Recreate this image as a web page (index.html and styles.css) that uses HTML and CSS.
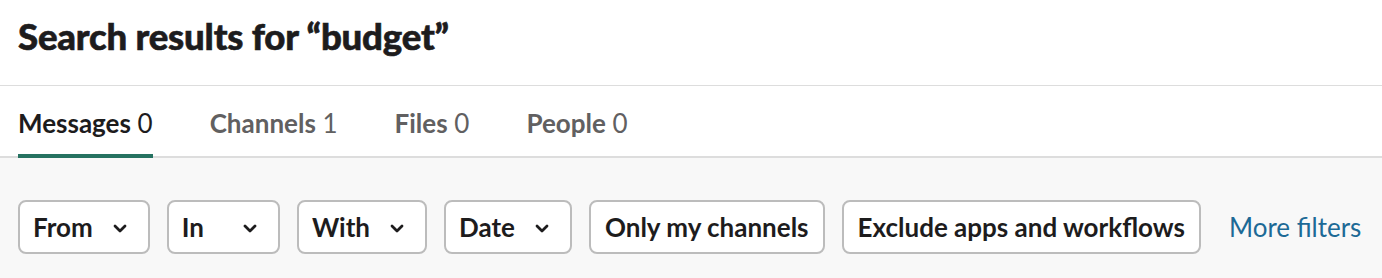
FILE: index.html
```html
<!DOCTYPE html>
<html>
<head>
<meta charset="utf-8">
<link rel="stylesheet" href="styles.css">
</head>
<body>
<div class="page">
  <header class="header">
    <h1 class="title">Search results for “budget”</h1>
  </header>
  <nav class="tabs">
    <div class="tab active"><span><span class="tab-label">Messages</span> <span class="tab-count">0</span></span></div>
    <div class="tab"><span><span class="tab-label">Channels</span> <span class="tab-count">1</span></span></div>
    <div class="tab"><span><span class="tab-label">Files</span> <span class="tab-count">0</span></span></div>
    <div class="tab"><span><span class="tab-label">People</span> <span class="tab-count">0</span></span></div>
  </nav>
  <section class="filters">
    <button class="filter dd"><span>From</span><svg class="chev" viewBox="0 0 14 9"><path d="M2 2 L7 7 L12 2" /></svg></button>
    <button class="filter dd w-in"><span>In</span><svg class="chev" viewBox="0 0 14 9"><path d="M2 2 L7 7 L12 2" /></svg></button>
    <button class="filter dd"><span>With</span><svg class="chev" viewBox="0 0 14 9"><path d="M2 2 L7 7 L12 2" /></svg></button>
    <button class="filter dd"><span>Date</span><svg class="chev" viewBox="0 0 14 9"><path d="M2 2 L7 7 L12 2" /></svg></button>
    <button class="filter">Only my channels</button>
    <button class="filter">Exclude apps and workflows</button>
    <a class="more" href="#">More filters</a>
  </section>
</div>
</body>
</html>
```
FILE: styles.css
```css
* { box-sizing: border-box; }
html, body { margin: 0; padding: 0; background: #fff; }
body { font-family: Lato, "Noto Sans", sans-serif; color: #1d1c1d; }
.page { width: 1382px; height: 278px; overflow: hidden; display: flex; flex-direction: column; }
.header { height: 86px; border-bottom: 1px solid #dddddd; padding: 0 18px; display: flex; align-items: center; }
.title { margin: 0; font-size: 36.6px; font-weight: 900; letter-spacing: -0.2px; line-height: 1; padding-bottom: 12px; -webkit-text-stroke: 0.6px #1d1c1d; }
.tabs { height: 72px; display: flex; gap: 57px; padding: 0 18px; border-bottom: 2px solid #dddddd; }
.tab { display: flex; align-items: center; font-size: 26px; color: #616061; position: relative; height: 100%; padding-top: 4px; white-space: nowrap; }
.tab-label { font-weight: 700; }
.tab-count { font-weight: 400; }
.tab.active { color: #1d1c1d; }
.tab.active::after { content: ""; position: absolute; left: 0; right: 0; bottom: -2px; height: 4px; background: #267261; }
.filters { flex: 1; background: #f8f8f8; display: flex; align-items: flex-start; gap: 17px; padding: 42px 18px 0; }
.filter { height: 54px; border: 2px solid #bcbcbc; border-radius: 8px; background: #fff; font-family: inherit; font-size: 26px; font-weight: 700; color: #1d1c1d; padding: 0 14px; display: flex; align-items: center; white-space: nowrap; }
.filter.dd { padding: 0 21px 0 13px; gap: 20px; }
.filter.w-in { gap: 39px; }
.chev { width: 14px; height: 9px; fill: none; stroke: #1d1c1d; stroke-width: 2.8; stroke-linecap: round; stroke-linejoin: round; margin-top: 2px; }
.more { line-height: 54px; margin-left: 11px; font-size: 26px; color: #1d6a96; text-decoration: none; white-space: nowrap; }
```
